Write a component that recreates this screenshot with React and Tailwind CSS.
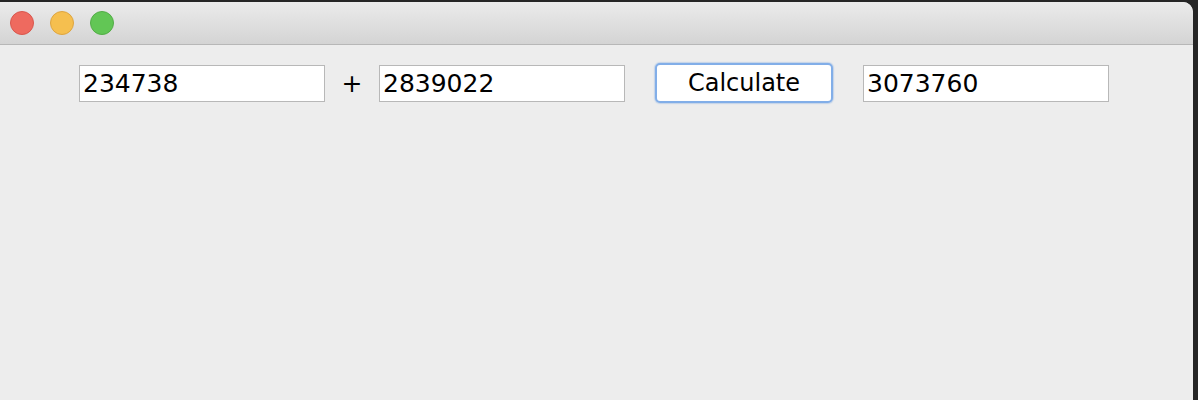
import React from 'react'

function Field({ value }) {
  return (
    <div className="w-[246px] h-[37px] bg-white border border-[#b8b8b8] flex items-center pl-[3px] text-[25px] text-black leading-none">
      {value}
    </div>
  )
}

function Light({ className }) {
  return <div className={`w-[24px] h-[24px] rounded-full border ${className}`} />
}

export default function App() {
  return (
    <div className="w-[1198px] h-[400px] bg-[#262626] pt-[2px] flex" style={{ fontFamily: '"DejaVu Sans", sans-serif' }}>
      <div className="w-[1193px] h-full bg-[#ededed] rounded-tr-[10px] flex flex-col overflow-hidden">
        <div className="h-[43px] bg-gradient-to-b from-[#ebebeb] to-[#d4d4d4] border-b border-[#b7b7b7] flex items-center pl-[10px] gap-[16px] shrink-0">
          <Light className="bg-[#ee6a5f] border-[#d9574d]" />
          <Light className="bg-[#f5bf4f] border-[#dea540]" />
          <Light className="bg-[#62c655] border-[#53ad47]" />
        </div>
        <div className="flex items-center pl-[79px] pt-[18px]">
          <Field value="234738" />
          <div className="w-[54px] text-center text-[25px] text-black leading-none">+</div>
          <Field value="2839022" />
          <div className="ml-[30px] w-[178px] h-[40px] bg-white rounded-[5px] border-2 border-[#82aee8] shadow-[0_0_1px_1px_rgba(120,165,225,0.35)] flex items-center justify-center text-[24px] text-black leading-none">
            Calculate
          </div>
          <div className="ml-[30px]">
            <Field value="3073760" />
          </div>
        </div>
      </div>
    </div>
  )
}
